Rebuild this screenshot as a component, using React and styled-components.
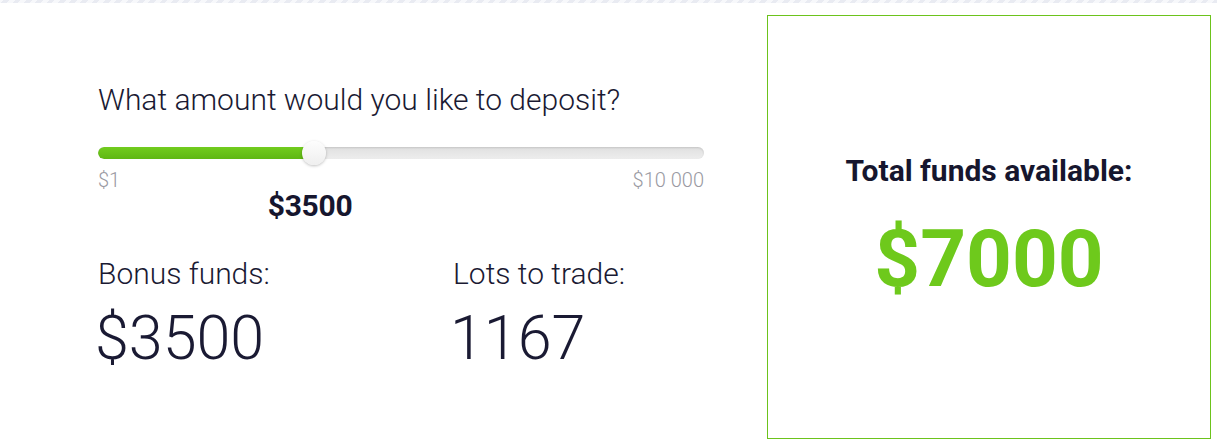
import React from "react";
import styled, { createGlobalStyle } from "styled-components";

const Global = createGlobalStyle`
  html, body { margin: 0; padding: 0; background: #fff; }
  body { font-family: Roboto, "Open Sans", Arial, sans-serif; color: #16162e; }
`;

const Stripe = styled.div`
  height: 3px;
  background: repeating-linear-gradient(
    -45deg,
    #e9ebf2 0 4px,
    #f7f8fb 4px 8px
  );
`;

const Row = styled.div`
  display: flex;
  align-items: flex-start;
  padding-left: 98px;
`;

const Left = styled.div`
  width: 606px;
  padding-top: 79px;
`;

const Question = styled.h2`
  margin: 0;
  font-weight: 300;
  font-size: 30px;
  line-height: 36px;
  color: #1a1a33;
`;

const SliderWrap = styled.div`
  position: relative;
  margin-top: 29px;
  height: 12px;
`;

const Track = styled.div`
  height: 12px;
  border-radius: 6px;
  background: linear-gradient(#e0e0e0, #ededed);
  box-shadow: inset 0 1px 2px rgba(0, 0, 0, 0.12);
  overflow: hidden;
`;

const Fill = styled.div`
  height: 100%;
  border-radius: 6px 0 0 6px;
  background: linear-gradient(#72cc1e, #5fb713);
`;

const Thumb = styled.div`
  position: absolute;
  top: 50%;
  width: 24px;
  height: 24px;
  margin-left: -12px;
  margin-top: -12px;
  border-radius: 50%;
  background: linear-gradient(#fdfdfd, #efefef);
  box-shadow: 0 1px 3px rgba(0, 0, 0, 0.25);
`;

const Scale = styled.div`
  display: flex;
  justify-content: space-between;
  margin-top: 10px;
  font-size: 20px;
  font-weight: 300;
  color: #9a9aa2;
  line-height: 22px;
`;

const Current = styled.div`
  position: relative;
  height: 34px;
  margin-top: -2px;
`;

const CurrentValue = styled.span`
  position: absolute;
  top: 0;
  transform: translateX(-50%);
  font-weight: 700;
  font-size: 30px;
  line-height: 34px;
  letter-spacing: -0.3px;
  color: #16162e;
`;

const Stats = styled.div`
  display: grid;
  grid-template-columns: 355px 1fr;
  margin-top: 34px;
`;

const StatLabel = styled.div`
  font-weight: 300;
  font-size: 30px;
  line-height: 34px;
  color: #1a1a33;
`;

const StatValue = styled.div`
  font-weight: 300;
  font-size: 61px;
  line-height: 70px;
  margin-top: 12px;
  color: #1a1a33;
  margin-left: -3px;
`;

const TotalBox = styled.div`
  box-sizing: border-box;
  margin-left: 63px;
  margin-top: 12px;
  width: 444px;
  height: 424px;
  border: 1px solid #6cc31c;
  display: flex;
  flex-direction: column;
  align-items: center;
  justify-content: center;
  padding-top: 2px;
`;

const TotalLabel = styled.div`
  font-weight: 700;
  font-size: 30px;
  line-height: 36px;
  color: #16162e;
`;

const TotalValue = styled.div`
  font-weight: 700;
  font-size: 80px;
  line-height: 90px;
  margin-top: 25px;
  color: #6ec91c;
`;

const min = 1;
const max = 10000;
const value = 3500;

export default function App() {
  const frac = (value - min) / (max - min);
  const thumbPos = `calc(12px + ${frac} * (100% - 24px))`;
  return (
    <>
      <Global />
      <Stripe />
      <Row>
        <Left>
          <Question>What amount would you like to deposit?</Question>
          <SliderWrap>
            <Track>
              <Fill style={{ width: thumbPos }} />
            </Track>
            <Thumb style={{ left: thumbPos }} />
          </SliderWrap>
          <Scale>
            <span>$1</span>
            <span>$10 000</span>
          </Scale>
          <Current>
            <CurrentValue style={{ left: `${frac * 100}%` }}>${value}</CurrentValue>
          </Current>
          <Stats>
            <div>
              <StatLabel>Bonus funds:</StatLabel>
              <StatValue>$3500</StatValue>
            </div>
            <div>
              <StatLabel>Lots to trade:</StatLabel>
              <StatValue>1167</StatValue>
            </div>
          </Stats>
        </Left>
        <TotalBox>
          <TotalLabel>Total funds available:</TotalLabel>
          <TotalValue>$7000</TotalValue>
        </TotalBox>
      </Row>
    </>
  );
}
